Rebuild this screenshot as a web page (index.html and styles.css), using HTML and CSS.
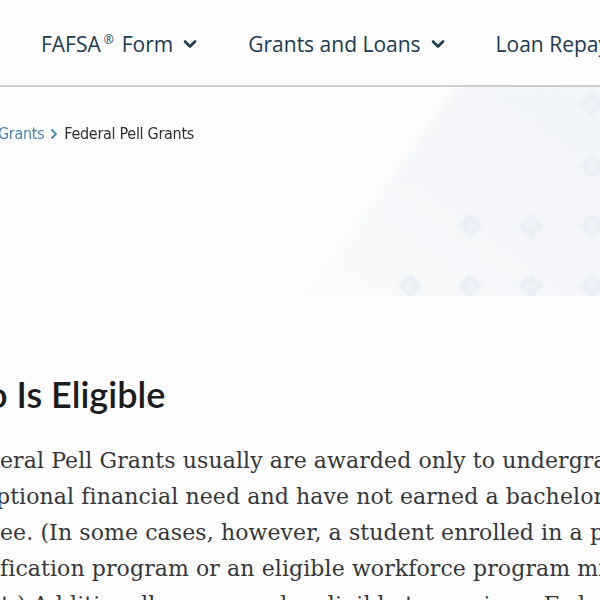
FILE: index.html
```html
<!DOCTYPE html>
<html lang="en">
<head>
<meta charset="utf-8">
<title>Federal Pell Grants</title>
<link rel="stylesheet" href="styles.css">
</head>
<body>
<header class="topnav">
  <nav class="menu">
    <a class="menu-item" href="#">FAFSA<sup class="reg">®</sup> Form
      <svg class="caret" viewBox="0 0 14 10" width="14" height="10"><path d="M2 2.5 L7 7.5 L12 2.5" fill="none" stroke="currentColor" stroke-width="2.6" stroke-linecap="round" stroke-linejoin="round"/></svg></a>
    <a class="menu-item" href="#">Grants and Loans
      <svg class="caret" viewBox="0 0 14 10" width="14" height="10"><path d="M2 2.5 L7 7.5 L12 2.5" fill="none" stroke="currentColor" stroke-width="2.6" stroke-linecap="round" stroke-linejoin="round"/></svg></a>
    <a class="menu-item" href="#">Loan Repayment
      <svg class="caret" viewBox="0 0 14 10" width="14" height="10"><path d="M2 2.5 L7 7.5 L12 2.5" fill="none" stroke="currentColor" stroke-width="2.6" stroke-linecap="round" stroke-linejoin="round"/></svg></a>
  </nav>
</header>

<section class="hero">
  <svg class="hero-bg" viewBox="0 0 600 209" width="600" height="209" aria-hidden="true">
    <defs>
      <linearGradient id="fade" x1="0" y1="1" x2="1" y2="0">
        <stop offset="0" stop-color="#f6f8fa" stop-opacity="0.5"/>
        <stop offset="0.5" stop-color="#f3f5f8" stop-opacity="0.9"/>
        <stop offset="1" stop-color="#f1f4f7" stop-opacity="1"/>
      </linearGradient>
      <filter id="soft" x="-50%" y="-50%" width="200%" height="200%">
        <feGaussianBlur stdDeviation="1.6"/>
      </filter>
      <filter id="edge" x="-10%" y="-10%" width="120%" height="120%">
        <feGaussianBlur stdDeviation="6"/>
      </filter>
    </defs>
    <polygon points="300,215 462,-6 610,-6 610,215" fill="url(#fade)" filter="url(#edge)"/>
    <g fill="#eff3f7" stroke="#e5ecf3" stroke-width="3" filter="url(#soft)">
      <rect x="584" y="10" width="14" height="14" transform="rotate(45 591 17)"/>
      <rect x="585" y="72" width="14" height="14" transform="rotate(45 592 79)"/>
      <rect x="463" y="132" width="14" height="14" transform="rotate(45 470 139)"/>
      <rect x="524" y="132" width="14" height="14" transform="rotate(45 531 139)"/>
      <rect x="585" y="132" width="14" height="14" transform="rotate(45 592 139)"/>
      <rect x="403" y="192" width="14" height="14" transform="rotate(45 410 199)"/>
      <rect x="463" y="192" width="14" height="14" transform="rotate(45 470 199)"/>
      <rect x="524" y="192" width="14" height="14" transform="rotate(45 531 199)"/>
      <rect x="585" y="192" width="14" height="14" transform="rotate(45 592 199)"/>
    </g>
  </svg>
  <nav class="crumbs">
    <span class="cut"><a href="#">Home</a><span class="sep">›</span><a href="#">Understand Aid</a><span class="sep">›</span><a href="#">Types of Aid</a><span class="sep">›</span></span>
    <a class="crumb-link" href="#">Grants</a>
    <svg class="crumb-sep" viewBox="0 0 8 12" width="8" height="12"><path d="M1.5 1.5 L6 6 L1.5 10.5" fill="none" stroke="currentColor" stroke-width="1.8"/></svg>
    <span class="crumb-current">Federal Pell Grants</span>
  </nav>
</section>

<main class="content">
  <h2 class="title"><span class="cut">Wh</span><span class="shift-title">o Is Eligible</span></h2>
  <div class="para">
    <div class="line"><span class="cut">Fed</span><span>eral Pell Grants usually are awarded only to undergraduate students who display</span></div>
    <div class="line"><span class="cut">exce</span><span class="shift-p">ptional financial need and have not earned a bachelor’s, graduate, or professional</span></div>
    <div class="line"><span class="cut">degr</span><span>ee. (In some cases, however, a student enrolled in a postbaccalaureate teacher</span></div>
    <div class="line"><span class="cut">certi</span><span>fication program or an eligible workforce program might receive a Federal Pell</span></div>
    <div class="line"><span class="cut">Gran</span><span class="shift-t">t.) Additionally, you may be eligible to receive a Federal Pell Grant if you</span></div>
  </div>
</main>
</body>
</html>
```

FILE: styles.css
```css
html, body {
  margin: 0;
  padding: 0;
}
body {
  background: #fdfdfd;
  width: 600px;
  height: 600px;
  overflow: hidden;
}
a { text-decoration: none; color: inherit; }

.topnav {
  height: 85px;
  border-bottom: 2px solid #cfd0d2;
  box-sizing: content-box;
}
.menu {
  display: flex;
  align-items: center;
  height: 87px;
  padding-left: 41px;
  gap: 51px;
  white-space: nowrap;
  font-family: "Open Sans", "Noto Sans", sans-serif;
  font-size: 21px;
  font-weight: 500;
  color: #203b52;
}
.menu-item {
  display: flex;
  align-items: center;
  flex-shrink: 0;
}
.reg {
  font-size: 12px;
  position: relative;
  top: -4px;
  margin-left: 3px;
  margin-right: 8px;
}
.caret {
  margin-left: 10px;
  margin-top: 1px;
}

.hero {
  position: relative;
  height: 208px;
}
.hero-bg {
  position: absolute;
  left: 0;
  top: 0;
}
.crumbs {
  position: relative;
  display: flex;
  align-items: center;
  padding-top: 37px;
  white-space: nowrap;
  font-family: "DejaVu Sans Condensed", "Roboto", sans-serif;
  font-stretch: condensed;
  font-size: 16px;
  letter-spacing: -0.3px;
  color: #2e2f31;
}
.cut {
  flex: 0 0 0;
  width: 0;
  display: flex;
  justify-content: flex-end;
  white-space: nowrap;
  visibility: hidden;
}
.crumbs .sep { margin: 0 6px; }
.crumb-link {
  color: #4b82ae;
  margin-left: -2px;
}
.crumb-sep {
  color: #4b82ae;
  margin: 1px 6px 0 6px;
}

.content {
  padding-top: 77px;
}
.title {
  display: flex;
  margin: 0;
  white-space: nowrap;
  font-family: "Lato", "Open Sans", sans-serif;
  font-weight: 600;
  font-size: 36px;
  line-height: 44px;
  color: #1b1c1e;
}
.shift-title { margin-left: -13px; }

.para {
  margin-top: 27px;
  font-family: "DejaVu Serif", serif;
  font-size: 22px;
  letter-spacing: 0.1px;
  line-height: 36px;
  color: #36373a;
}
.line {
  display: flex;
  white-space: nowrap;
}
.shift-p { margin-left: -4px; }
.shift-t { margin-left: 1px; }
```
